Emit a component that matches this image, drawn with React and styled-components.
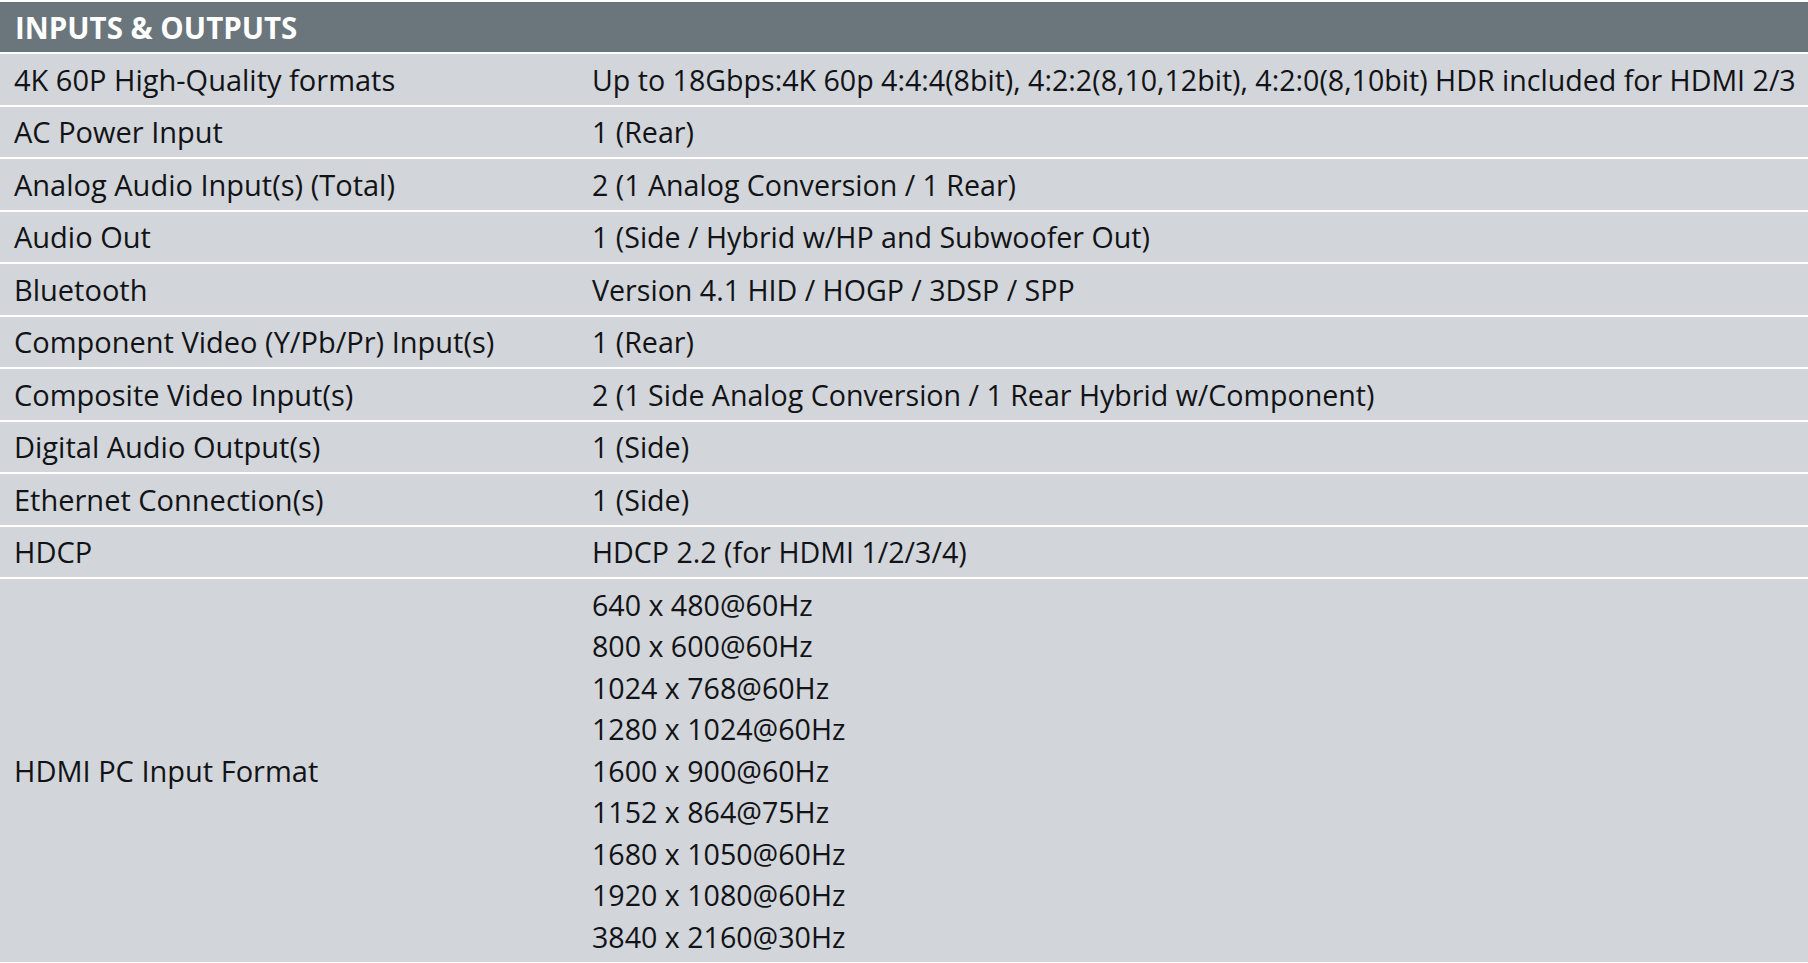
import styled, { createGlobalStyle } from 'styled-components';

const GlobalStyle = createGlobalStyle`
  html, body {
    margin: 0;
    padding: 0;
    background: #ffffff;
  }
  body {
    font-family: "Open Sans", "Noto Sans", "Liberation Sans", sans-serif;
    color: #111316;
    overflow: hidden;
  }
`;

const SpecTable = styled.section`
  padding-top: 2px;
  width: 100%;
`;

const SectionHeader = styled.h2`
  margin: 0;
  height: 50px;
  display: flex;
  align-items: center;
  padding: 0 15px;
  background: #6a757c;
  color: #ffffff;
  font-size: 29.5px;
  font-weight: 700;
  border-bottom: 2.5px solid #ffffff;
`;

const Row = styled.div`
  display: grid;
  grid-template-columns: 577px 1fr;
  background: #d2d5d9;
  border-bottom: 2px solid #ffffff;
`;

const Cell = styled.div`
  padding: 4.5px 15px;
  font-size: 28.8px;
  line-height: 41.5px;
  display: flex;
  flex-direction: column;
  justify-content: center;
  white-space: nowrap;
`;

const Label = styled(Cell)`
  padding-left: 14px;
  font-size: 29px;
`;

const Value = styled(Cell)`
  padding-left: 15px;
  font-size: 28.6px;
`;

const specs = [
  ['4K 60P High-Quality formats', ['Up to 18Gbps:4K 60p 4:4:4(8bit), 4:2:2(8,10,12bit), 4:2:0(8,10bit) HDR included for HDMI 2/3']],
  ['AC Power Input', ['1 (Rear)']],
  ['Analog Audio Input(s) (Total)', ['2 (1 Analog Conversion / 1 Rear)']],
  ['Audio Out', ['1 (Side / Hybrid w/HP and Subwoofer Out)']],
  ['Bluetooth', ['Version 4.1 HID / HOGP / 3DSP / SPP']],
  ['Component Video (Y/Pb/Pr) Input(s)', ['1 (Rear)']],
  ['Composite Video Input(s)', ['2 (1 Side Analog Conversion / 1 Rear Hybrid w/Component)']],
  ['Digital Audio Output(s)', ['1 (Side)']],
  ['Ethernet Connection(s)', ['1 (Side)']],
  ['HDCP', ['HDCP 2.2 (for HDMI 1/2/3/4)']],
  ['HDMI PC Input Format', [
    '640 x 480@60Hz',
    '800 x 600@60Hz',
    '1024 x 768@60Hz',
    '1280 x 1024@60Hz',
    '1600 x 900@60Hz',
    '1152 x 864@75Hz',
    '1680 x 1050@60Hz',
    '1920 x 1080@60Hz',
    '3840 x 2160@30Hz',
  ]],
];

export default function App() {
  return (
    <>
      <GlobalStyle />
      <SpecTable>
        <SectionHeader>INPUTS &amp; OUTPUTS</SectionHeader>
        {specs.map(([label, values]) => (
          <Row key={label}>
            <Label>{label}</Label>
            <Value>
              {values.map((v) => (
                <span key={v}>{v}</span>
              ))}
            </Value>
          </Row>
        ))}
      </SpecTable>
    </>
  );
}
